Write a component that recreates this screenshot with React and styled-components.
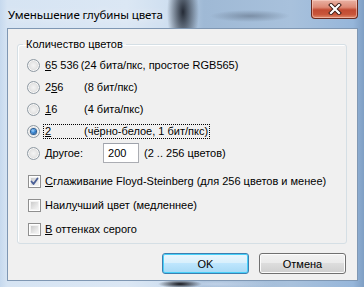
import React from "react";
import styled, { createGlobalStyle } from "styled-components";

const GlobalStyle = createGlobalStyle`
  html, body { margin: 0; padding: 0; background: #fff; }
  body { width: 364px; height: 287px; overflow: hidden; }
`;

const Window = styled.div`
  width: 364px;
  height: 287px;
  box-sizing: border-box;
  display: flex;
  flex-direction: column;
  position: relative;
  overflow: hidden;
  font-family: "Liberation Sans", Arial, sans-serif;
  font-size: 11px;
  color: #000;
  background:
    radial-gradient(ellipse 16px 40px at 183px 12px, rgba(20, 25, 35, 0.9), rgba(20, 25, 35, 0) 100%),
    radial-gradient(ellipse 40px 6px at 250px 16px, rgba(90, 105, 125, 0.55), rgba(90, 105, 125, 0) 100%),
    radial-gradient(ellipse 22px 4px at 180px 284px, rgba(10, 10, 15, 0.95), rgba(10, 10, 15, 0) 100%),
    radial-gradient(ellipse 60px 5px at 215px 284px, rgba(200, 215, 235, 0.8), rgba(200, 215, 235, 0) 100%),
    linear-gradient(90deg, #c6d9ee 0%, #d6e4f3 2%, #dbe7f4 35%, #cfdff0 46%, #9fb9d5 56%, #a8c1dc 80%, #96b6da 97%, #7f9fc4 100%);
`;

const TitleBar = styled.div`
  height: 28px;
  flex: none;
  display: flex;
  align-items: flex-start;
  justify-content: space-between;
  padding-left: 8px;
`;

const Title = styled.div`
  font-family: "Noto Sans", "Open Sans", sans-serif;
  font-size: 11.5px;
  line-height: 16px;
  margin-top: 7px;
  color: #000;
  letter-spacing: -0.1px;
  text-shadow: 0 0 8px rgba(255, 255, 255, 0.9);
`;

const CloseButton = styled.div`
  width: 47px;
  height: 19px;
  margin-right: 6px;
  box-sizing: border-box;
  border: 1px solid #6b2a1f;
  border-top: none;
  border-radius: 0 0 4px 4px;
  background: linear-gradient(180deg, #e9b1a3 0%, #dd8a76 40%, #c24b33 55%, #c8553a 80%, #e08c6f 100%);
  box-shadow: inset 0 0 0 1px rgba(255, 220, 210, 0.5);
  display: flex;
  align-items: center;
  justify-content: center;
`;

const Client = styled.div`
  flex: 1;
  margin: 0 6px 6px 7px;
  box-sizing: border-box;
  background: #f0f0f0;
  border: 1px solid #7f97b3;
  display: flex;
  flex-direction: column;
`;

const GroupBox = styled.fieldset`
  margin: 9px 10px 0 9px;
  padding: 3px 0 2px 0;
  border: 1px solid #d5dfe5;
  border-radius: 3px;
  box-shadow: inset 1px 1px 0 #fff;
  min-width: 0;
`;

const Legend = styled.legend`
  margin-left: 5px;
  padding: 0 3px;
  line-height: 13px;
  font-size: 11px;
`;

const Row = styled.div`
  height: ${(p) => p.$h || 22}px;
  margin-top: ${(p) => p.$mt || 0}px;
  display: flex;
  align-items: center;
  padding-left: 9px;
`;

const Radio = styled.span`
  width: 13px;
  height: 13px;
  box-sizing: border-box;
  border-radius: 50%;
  border: 1px solid #8f9aa3;
  background: radial-gradient(circle at 50% 50%, #f4f4f4 0%, #e6e6e6 45%, #d4d4d4 70%, #f6f6f6 100%);
  box-shadow: inset 0 0 0 1px #f8f8f8;
  flex: none;
  display: flex;
  align-items: center;
  justify-content: center;
  &::after {
    content: "";
    display: ${(p) => (p.$checked ? "block" : "none")};
    width: 5px;
    height: 5px;
    border-radius: 50%;
    background: radial-gradient(circle at 40% 35%, #a8d8ff 0%, #3a8ad8 45%, #0b3f7c 100%);
    box-shadow: 0 0 0 1px #2b5e94;
  }
`;

const Check = styled.span`
  width: 13px;
  height: 13px;
  box-sizing: border-box;
  border: 1px solid #8f8f8f;
  background: #fff;
  flex: none;
  position: relative;
  margin-left: 1px;
  &::before {
    content: "";
    position: absolute;
    left: 1px;
    top: 1px;
    right: 1px;
    bottom: 1px;
    background: linear-gradient(135deg, #cbcbcb 0%, #e5e5e5 60%, #f4f4f4 100%);
    border: 1px solid #f2f2f2;
    box-sizing: border-box;
  }
  svg {
    position: absolute;
    left: 1px;
    top: 1px;
  }
`;

const Label = styled.span`
  margin-left: ${(p) => (p.$ml !== undefined ? p.$ml : 4)}px;
  padding: 0 1px;
  line-height: 13px;
  white-space: pre;
  outline: ${(p) => (p.$focus ? "1px dotted #000" : "none")};
  outline-offset: 0;
  display: inline-block;
`;

const Num = styled.span`
  display: inline-block;
  min-width: ${(p) => p.$w || 0}px;
  margin-right: ${(p) => p.$mr || 0}px;
`;

const U = styled.span`
  text-decoration: underline;
  text-underline-offset: 1px;
`;

const NumberInput = styled.div`
  width: 36px;
  height: 20px;
  box-sizing: border-box;
  margin-left: 19px;
  margin-right: 5px;
  border: 1px solid #abadb3;
  border-top-color: #9ea2ab;
  background: #fff;
  padding: 0 4px;
  display: flex;
  align-items: center;
  font-size: 11px;
`;

const ButtonRow = styled.div`
  display: flex;
  justify-content: flex-end;
  gap: 10px;
  margin: 9px 11px 0 0;
`;

const Button = styled.div`
  width: 87px;
  height: 21px;
  box-sizing: border-box;
  border-radius: 3px;
  border: 1px solid ${(p) => (p.$default ? "#3c7fb1" : "#707070")};
  background: ${(p) =>
    p.$default
      ? "linear-gradient(180deg, #eaf6fd 0%, #d9f0fc 45%, #bee6fd 50%, #a7d9f5 100%)"
      : "linear-gradient(180deg, #f2f2f2 0%, #ebebeb 45%, #dddddd 50%, #cfcfcf 100%)"};
  box-shadow: inset 0 0 0 1px ${(p) => (p.$default ? "#48d0f9" : "#fcfcfc")};
  display: flex;
  align-items: center;
  justify-content: center;
  font-size: 11px;
`;

const CheckMark = () => (
  <svg width="9" height="9" viewBox="0 0 9 9">
    <path d="M1.5 4.5 L3.5 7 L7.5 1.5" fill="none" stroke="#4a5f97" strokeWidth="1.8" strokeLinecap="round" strokeLinejoin="round" />
  </svg>
);

const CloseX = () => (
  <svg width="14" height="12" viewBox="0 0 14 12">
    <path d="M3 2 L11 10 M11 2 L3 10" stroke="#3b1a14" strokeWidth="4" strokeLinecap="square" />
    <path d="M3 2 L11 10 M11 2 L3 10" stroke="#ffffff" strokeWidth="2.2" strokeLinecap="square" />
  </svg>
);

export default function App() {
  return (
    <>
      <GlobalStyle />
      <Window>
        <TitleBar>
          <Title>Уменьшение глубины цвета</Title>
          <CloseButton>
            <CloseX />
          </CloseButton>
        </TitleBar>
        <Client>
          <GroupBox>
            <Legend>Количество цветов</Legend>
            <Row>
              <Radio />
              <Label>
                <Num $mr={2}><U>6</U>5 536</Num>(24 бита/пкс, простое RGB565)
              </Label>
            </Row>
            <Row>
              <Radio />
              <Label>
                <Num $w={39}>2<U>5</U>6</Num>(8 бит/пкс)
              </Label>
            </Row>
            <Row>
              <Radio />
              <Label>
                <Num $w={39}><U>1</U>6</Num>(4 бита/пкс)
              </Label>
            </Row>
            <Row>
              <Radio $checked />
              <Label $focus>
                <Num $w={39}><U>2</U></Num>(чёрно-белое, 1 бит/пкс)
              </Label>
            </Row>
            <Row>
              <Radio />
              <Label>
                <U>Д</U>ругое:
              </Label>
              <NumberInput>200</NumberInput>
              <span>(2 .. 256 цветов)</span>
            </Row>
            <Row $h={24} $mt={5}>
              <Check>
                <CheckMark />
              </Check>
              <Label $ml={3}>
                <U>С</U>глаживание Floyd-Steinberg (для 256 цветов и менее)
              </Label>
            </Row>
            <Row $h={24}>
              <Check />
              <Label $ml={3}>
                Наил<U>у</U>чший цвет (медленнее)
              </Label>
            </Row>
            <Row $h={24}>
              <Check />
              <Label $ml={3}>
                <U>В</U> оттенках серого
              </Label>
            </Row>
          </GroupBox>
          <ButtonRow>
            <Button $default>OK</Button>
            <Button>Отмена</Button>
          </ButtonRow>
        </Client>
      </Window>
    </>
  );
}
